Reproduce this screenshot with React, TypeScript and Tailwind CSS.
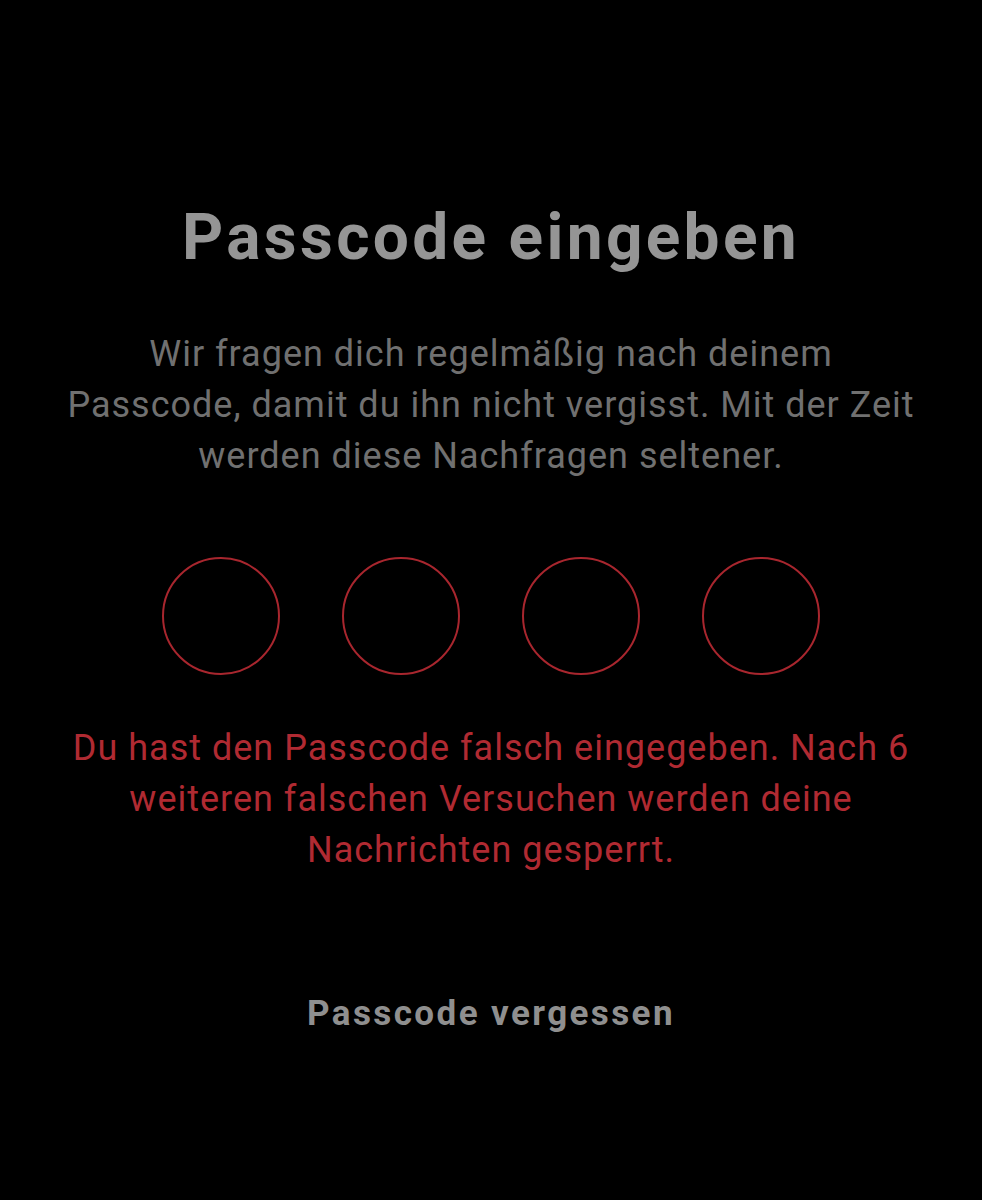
export default function App() {
  const dots = [0, 1, 2, 3];

  return (
    <div className="min-h-[1200px] w-full bg-black flex flex-col items-center font-['Roboto',sans-serif]">
      {/* Title */}
      <h1 className="mt-[199px] text-[64px] leading-[77px] font-bold text-[#959595] tracking-[3.3px]">
        Passcode eingeben
      </h1>

      {/* Explanation */}
      <p className="mt-[53px] text-center text-[36px] leading-[51px] tracking-[1px] text-[#707070]">
        <span className="block">Wir fragen dich regelmäßig nach deinem</span>
        <span className="block">Passcode, damit du ihn nicht vergisst. Mit der Zeit</span>
        <span className="block">werden diese Nachfragen seltener.</span>
      </p>

      {/* Passcode dots */}
      <div className="mt-[75px] flex gap-[62px]">
        {dots.map((d) => (
          <div
            key={d}
            className="w-[118px] h-[118px] rounded-full border-[2.5px] border-[#a8262e]"
          />
        ))}
      </div>

      {/* Error */}
      <p className="mt-[48px] text-center text-[36px] leading-[51px] tracking-[1px] text-[#b02a32]">
        <span className="block">Du hast den Passcode falsch eingegeben. Nach 6</span>
        <span className="block">weiteren falschen Versuchen werden deine</span>
        <span className="block">Nachrichten gesperrt.</span>
      </p>

      {/* Forgot */}
      <button
        type="button"
        className="mt-[118px] text-[35px] leading-[40px] font-bold tracking-[2.4px] text-[#8f8f8f]"
      >
        Passcode vergessen
      </button>
    </div>
  );
}
